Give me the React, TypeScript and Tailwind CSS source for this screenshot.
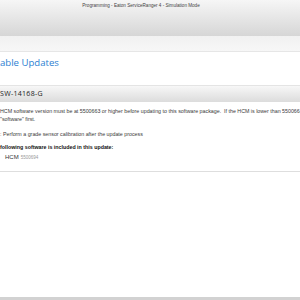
export default function App() {
  return (
    <div className="w-[300px] h-[300px] overflow-hidden bg-white flex flex-col" style={{ fontFamily: '"Liberation Sans", Arial, sans-serif' }}>
      <div className="h-[36px] shrink-0 bg-gradient-to-b from-[#f6f6f6] to-[#d6d6d6] flex justify-center">
        <div className="text-[4.6px] text-[#444] pt-[3px] pr-[18px] whitespace-nowrap">Programming - Eaton ServiceRanger 4 - Simulation Mode</div>
      </div>
      <div className="h-[16px] shrink-0 bg-gradient-to-b from-[#f1f1f1] to-[#f7f7f7] border-b border-[#e6e6e6]"></div>
      <div className="h-[33px] shrink-0 flex items-start pt-[6px]">
        <div className="text-[9.6px] text-[#2d7fd2] leading-none whitespace-nowrap" style={{ fontFamily: '"Open Sans", sans-serif' }}>able Updates</div>
      </div>
      <div className="h-[17px] shrink-0 bg-gradient-to-b from-[#f7f7f7] to-[#dcdcdc] border-t border-[#e4e4e4] flex items-center">
        <div className="text-[7px] text-[#222] whitespace-nowrap tracking-[0.3px]" style={{ fontFamily: '"Open Sans", sans-serif' }}>SW-14168-G</div>
      </div>
      <div className="flex flex-col text-[5.3px] text-[#3a3a3a] whitespace-nowrap">
        <div className="mt-[5px] leading-[8px]">HCM software version must be at 5500663 or higher before updating to this software package.&nbsp; If the HCM is lower than 5500663</div>
        <div className="leading-[8px]">&quot;software&quot; first.</div>
        <div className="mt-[7px] leading-[8px]">: Perform a grade sensor calibration after the update process</div>
        <div className="mt-[5px] leading-[8px] font-bold text-[#111]">following software is included in this update:</div>
        <div className="mt-[2px] leading-[8px] pl-[5px] flex items-baseline gap-[2px]">
          <span className="text-[6px] text-[#333]">HCM</span>
          <span className="text-[4.5px] text-[#999]">5500694</span>
        </div>
      </div>
      <div className="mt-[9px] border-t border-[#dedede]"></div>
      <div className="flex-1"></div>
      <div className="h-[3px] shrink-0 bg-[#d2d2d2]"></div>
    </div>
  );
}
